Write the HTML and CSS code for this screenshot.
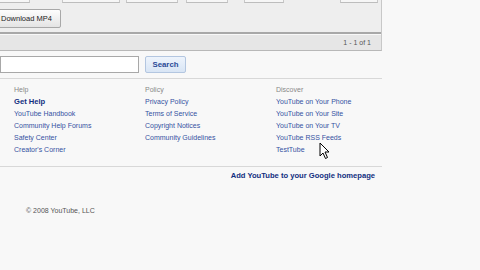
FILE: index.html
```html
<!DOCTYPE html>
<html>
<head>
    <title>YouTube - Footer</title>
    <link rel="stylesheet" href="styles.css">
</head>
<body>
    <div class="page">
        <!-- Results panel -->
        <div class="panel">
            <div class="tabs">
                <span class="tab t1"></span>
                <span class="tab t2"></span>
                <span class="tab t3"></span>
                <span class="tab t4"></span>
                <span class="tab t5"></span>
                <span class="tab t6"></span>
            </div>
            <div class="actions">
                <button class="btn">Download MP4</button>
            </div>
            <div class="pager">1 - 1 of 1</div>
        </div>

        <!-- Search -->
        <div class="search">
            <input type="text" class="search-box">
            <button class="search-btn">Search</button>
        </div>

        <!-- Footer links -->
        <div class="footer">
            <div class="col">
                <div class="head">Help</div>
                <a class="strong">Get Help</a>
                <a>YouTube Handbook</a>
                <a>Community Help Forums</a>
                <a>Safety Center</a>
                <a>Creator's Corner</a>
            </div>
            <div class="col">
                <div class="head">Policy</div>
                <a>Privacy Policy</a>
                <a>Terms of Service</a>
                <a>Copyright Notices</a>
                <a>Community Guidelines</a>
            </div>
            <div class="col">
                <div class="head">Discover</div>
                <a>YouTube on Your Phone</a>
                <a>YouTube on Your Site</a>
                <a>YouTube on Your TV</a>
                <a>YouTube RSS Feeds</a>
                <a>TestTube</a>
            </div>
        </div>

        <div class="homepage"><a class="strong">Add YouTube to your Google homepage</a></div>

        <div class="copyright">&copy; 2008 YouTube, LLC</div>
    </div>

    <svg class="cursor" width="12" height="18" viewBox="0 0 12 18">
        <path d="M1 1 L1 14 L4 11 L6.5 16.5 L8.5 15.5 L6 10 L10 10 Z" fill="#fff" stroke="#000" stroke-width="1"/>
    </svg>
</body>
</html>
```

FILE: styles.css
```css
body { margin: 0; background: #f8f8f8; font-family: Arial, "Liberation Sans", sans-serif; font-size: 7px; color: #333; }
.page { width: 382px; position: relative; }
.panel { background: #eeeeee; border-right: 1px solid #c8c8c8; border-bottom: 1px solid #b8b8b8; }
.tabs { display: flex; height: 3px; }
.tab { height: 2px; background: #f6f6f6; border-bottom: 1px solid #bdbdbd; border-left: 1px solid #c8c8c8; border-right: 1px solid #c8c8c8; }
.t1 { width: 30px; margin-left: -2px; }
.t2 { width: 56px; margin-left: 32px; }
.t3 { width: 50px; margin-left: 6px; }
.t4 { width: 40px; margin-left: 8px; }
.t5 { width: 38px; margin-left: 16px; }
.t6 { width: 36px; margin-left: 56px; }
.actions { padding-top: 6px; height: 23px; border-bottom: 2px solid #a8a8a8; }
.btn { margin-left: -10px; height: 19px; padding: 0 8px 0 10px; font-family: Arial, "Liberation Sans", sans-serif; font-size: 7.5px; color: #222; background: linear-gradient(#fdfdfd, #e4e4e4); border: 1px solid #a8a8a8; border-radius: 2px; }
.pager { background: #e6e6e6; border-top: 1px solid #f8f8f8; height: 15px; line-height: 15px; text-align: right; padding-right: 10px; color: #555; }
.search { display: flex; gap: 6px; margin-top: 5px; height: 17px; padding-bottom: 5px; border-bottom: 1px solid #d8d8d8; }
.search-box { width: 139px; height: 17px; box-sizing: border-box; margin: 0; border: 1px solid #a8a8a8; background: #fff; }
.search-btn { width: 41px; height: 17px; padding: 0; font-family: Arial, "Liberation Sans", sans-serif; font-size: 7.8px; font-weight: bold; color: #2a4a96; background: linear-gradient(#eef4fc, #d8e5f5); border: 1px solid #b3c6e0; border-radius: 2px; }
.footer { display: grid; grid-template-columns: 131px 131px 1fr; padding: 5px 0 10px 14px; border-bottom: 1px solid #d8d8d8; }
.col { display: flex; flex-direction: column; }
.col a, .col .head { line-height: 12px; height: 12px; }
.head { color: #888; }
a { color: #3552a2; }
.strong { font-weight: bold; color: #132f80; font-size: 7.6px; }
.homepage { text-align: right; padding: 3px 7px 0 0; line-height: 12px; }
.copyright { margin: 23px 0 0 26px; color: #555; line-height: 12px; }
.cursor { position: absolute; left: 319px; top: 142px; }
```
